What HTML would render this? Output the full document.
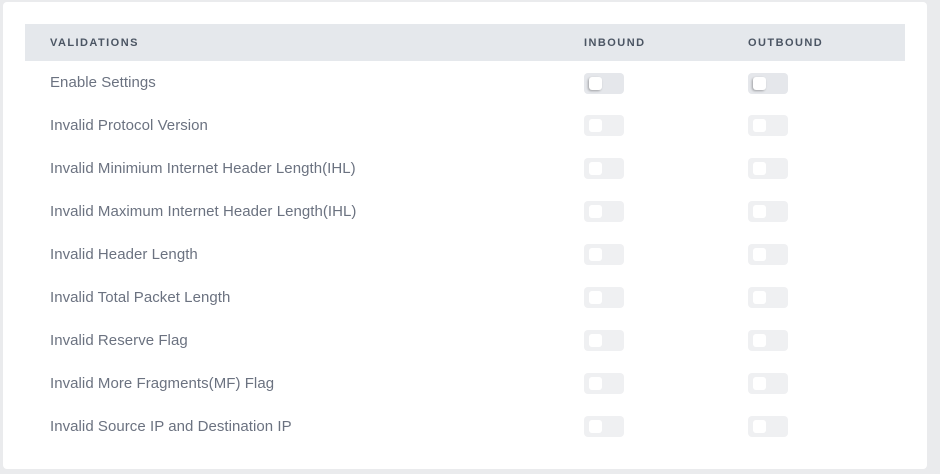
<!DOCTYPE html>
<html><head><style>
body{margin:0;width:940px;height:474px;background:#eaebed;font-family:"Liberation Sans",sans-serif;position:relative;overflow:hidden}
.card{position:absolute;left:3px;top:2px;width:924px;height:467px;background:#fff;border-radius:4px}
.hd{position:absolute;left:25px;top:24px;width:880px;height:37px;background:#e5e8ec}
.hd span{position:absolute;top:13px;font-size:11px;font-weight:bold;letter-spacing:1.45px;color:#4b5563}
.lbl{position:absolute;left:50px;font-size:15px;color:#6b7280;letter-spacing:0.05px}
.tg{position:absolute;width:40px;height:21px;border-radius:4px;background:#eff0f2}
.tg i{position:absolute;left:5px;top:4px;width:13px;height:13px;border-radius:3px;background:#fff}
.tg.on{background:#e5e7eb}
.tg.on i{box-shadow:-1px 1px 2px rgba(0,0,0,.3)}
</style></head><body>
<div class="card"></div>
<div class="hd"><span style="left:25px">VALIDATIONS</span><span style="left:559px">INBOUND</span><span style="left:723px">OUTBOUND</span></div>
<div class="lbl" style="top:74px">Enable Settings</div>
<div class="lbl" style="top:117px">Invalid Protocol Version</div>
<div class="lbl" style="top:160px">Invalid Minimium Internet Header Length(IHL)</div>
<div class="lbl" style="top:203px">Invalid Maximum Internet Header Length(IHL)</div>
<div class="lbl" style="top:246px">Invalid Header Length</div>
<div class="lbl" style="top:289px">Invalid Total Packet Length</div>
<div class="lbl" style="top:332px">Invalid Reserve Flag</div>
<div class="lbl" style="top:375px">Invalid More Fragments(MF) Flag</div>
<div class="lbl" style="top:418px">Invalid Source IP and Destination IP</div>
<div class="tg on" style="left:584px;top:73px"><i></i></div><div class="tg on" style="left:748px;top:73px"><i></i></div>
<div class="tg" style="left:584px;top:115px"><i></i></div><div class="tg" style="left:748px;top:115px"><i></i></div>
<div class="tg" style="left:584px;top:158px"><i></i></div><div class="tg" style="left:748px;top:158px"><i></i></div>
<div class="tg" style="left:584px;top:201px"><i></i></div><div class="tg" style="left:748px;top:201px"><i></i></div>
<div class="tg" style="left:584px;top:244px"><i></i></div><div class="tg" style="left:748px;top:244px"><i></i></div>
<div class="tg" style="left:584px;top:287px"><i></i></div><div class="tg" style="left:748px;top:287px"><i></i></div>
<div class="tg" style="left:584px;top:330px"><i></i></div><div class="tg" style="left:748px;top:330px"><i></i></div>
<div class="tg" style="left:584px;top:373px"><i></i></div><div class="tg" style="left:748px;top:373px"><i></i></div>
<div class="tg" style="left:584px;top:416px"><i></i></div><div class="tg" style="left:748px;top:416px"><i></i></div>
</body></html>
